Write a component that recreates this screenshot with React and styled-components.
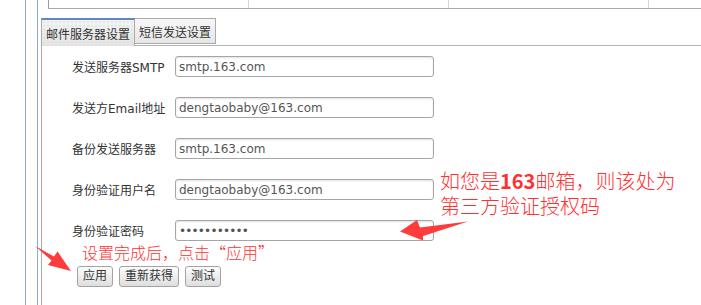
import React from "react";
import styled, { createGlobalStyle } from "styled-components";

const Global = createGlobalStyle`
  html, body, #root { margin: 0; padding: 0; height: 100%; }
  body {
    background: #fff;
    font-family: "DejaVu Sans", "Noto Sans CJK SC", sans-serif;
    font-size: 12px;
    color: #333;
    overflow: hidden;
  }
`;

const Page = styled.div`
  position: relative;
  height: 305px;
  width: 701px;
  padding-left: 25px;
  box-sizing: border-box;
  display: flex;
  overflow: hidden;
`;

const Frame = styled.div`
  display: flex;
  flex: 1;
  min-width: 0;
  border-left: 1px solid #8da7d3;
  padding-left: ${(p) => p.$pad}px;
`;

const Content = styled.div`
  flex: 1;
  min-width: 0;
  display: flex;
  flex-direction: column;
`;

const TopTable = styled.div`
  margin-left: 7px;
  height: 8px;
  display: flex;
  border-left: 1px solid #9a9a9a;
  border-bottom: 1px solid #aaa;
  overflow: hidden;
`;

const Cell = styled.div`
  flex: 0 0 200px;
  box-sizing: border-box;
  border-right: 1px solid #d6d6d6;
`;

const TabStrip = styled.div`
  margin-top: 9px;
  height: 27px;
  display: flex;
  align-items: flex-end;
  border-bottom: 1px solid #b4b4b4;
`;

const Tab = styled.div`
  box-sizing: border-box;
  padding: 0 4px;
  display: flex;
  align-items: center;
  color: #333;
  font-size: 12px;
  white-space: nowrap;
  ${(p) =>
    p.$active
      ? `
    height: 28px;
    margin-bottom: -1px;
    border: 1px solid #aaa;
    border-top: 2px solid #5f88c2;
    border-bottom: none;
    background-color: #ececec;
    background-image: radial-gradient(#d8d8d8 0.6px, transparent 0.8px),
      linear-gradient(#f4f4f4, #e4e4e4);
    background-size: 4px 4px, 100% 100%;
    position: relative;
    z-index: 1;
  `
      : `
    height: 26px;
    margin-left: -1px;
    margin-bottom: 1px;
    border: 1px solid #aaa;
    padding-top: 1px;
    background: linear-gradient(#f7f7f7, #e6e6e6);
  `}
`;

const Panel = styled.div`
  flex: 1;
  border-left: 1px solid #aaa;
  padding: 10px 0 0 30px;
  display: flex;
  flex-direction: column;
`;

const Rows = styled.div`
  display: flex;
  flex-direction: column;
  gap: 20px;
`;

const Row = styled.div`
  display: flex;
  align-items: center;
  height: 21px;
`;

const Label = styled.label`
  width: 103px;
  flex: none;
  font-size: 12px;
  color: #333;
  white-space: nowrap;
`;

const Input = styled.input`
  box-sizing: border-box;
  width: 259px;
  height: 21px;
  margin: 0;
  padding: 0 3px;
  border: 1px solid #a6a6a6;
  border-radius: 3px;
  box-shadow: inset 0 1px 2px rgba(0, 0, 0, 0.12);
  background: #fff;
  font-family: "DejaVu Sans", "Noto Sans CJK SC", sans-serif;
  font-size: 12px;
  color: #555;
  outline: none;
  letter-spacing: ${(p) => (p.type === "password" ? "-0.8px" : "0")};
`;

const Buttons = styled.div`
  margin-top: 25px;
  margin-left: 5px;
  display: flex;
  gap: 6px;
`;

const Button = styled.button`
  box-sizing: border-box;
  height: 21px;
  margin: 0;
  padding: 0 5px;
  border: 1px solid #a3a3a3;
  border-radius: 3px;
  background: linear-gradient(#fdfdfd, #ececec 55%, #dedede);
  font-family: "DejaVu Sans", "Noto Sans CJK SC", sans-serif;
  font-size: 12px;
  color: #333;
  line-height: 19px;
`;

const Note = styled.div`
  position: absolute;
  left: ${(p) => p.$x}px;
  top: ${(p) => p.$y}px;
  color: #ff3030;
  font-family: "Noto Sans CJK SC", sans-serif;
  font-weight: 300;
  font-size: ${(p) => p.$size}px;
  line-height: ${(p) => p.$lh}px;
  white-space: nowrap;
  b { font-weight: 700; }
`;

const Overlay = styled.svg`
  position: absolute;
  left: 0;
  top: 0;
  pointer-events: none;
`;

const fields = [
  { label: "发送服务器SMTP", value: "smtp.163.com" },
  { label: "发送方Email地址", value: "dengtaobaby@163.com" },
  { label: "备份发送服务器", value: "smtp.163.com" },
  { label: "身份验证用户名", value: "dengtaobaby@163.com" },
  { label: "身份验证密码", value: "12345678901", type: "password" },
];

export default function App() {
  return (
    <>
      <Global />
      <Page>
        <Frame $pad={11}>
          <Frame $pad={3}>
            <Content>
              <TopTable>
                <Cell />
                <Cell />
                <Cell />
                <Cell />
              </TopTable>
              <TabStrip>
                <Tab $active>邮件服务器设置</Tab>
                <Tab>短信发送设置</Tab>
              </TabStrip>
              <Panel>
                <Rows>
                  {fields.map((f) => (
                    <Row key={f.label}>
                      <Label>{f.label}</Label>
                      <Input type={f.type || "text"} defaultValue={f.value} readOnly />
                    </Row>
                  ))}
                </Rows>
                <Buttons>
                  <Button>应用</Button>
                  <Button>重新获得</Button>
                  <Button>测试</Button>
                </Buttons>
              </Panel>
            </Content>
          </Frame>
        </Frame>
        <Note $x={440} $y={168} $size={20} $lh={25}>
          如您是<b>163</b>邮箱，则该处为
          <br />
          第三方验证授权码
        </Note>
        <Note $x={82} $y={242} $size={16} $lh={20}>
          设置完成后，点击“应用”
        </Note>
        <Overlay width="701" height="305" viewBox="0 0 701 305">
          <polygon
            fill="#ff3b3b"
            points="35,246 54,256.5 57.5,251.5 71,271 48,265 51.5,260.5"
          />
          <polygon
            fill="#ff3b3b"
            points="400,231.5 417,220 420,227.5 468,221.5 423,236 423,240.5"
          />
        </Overlay>
      </Page>
    </>
  );
}
